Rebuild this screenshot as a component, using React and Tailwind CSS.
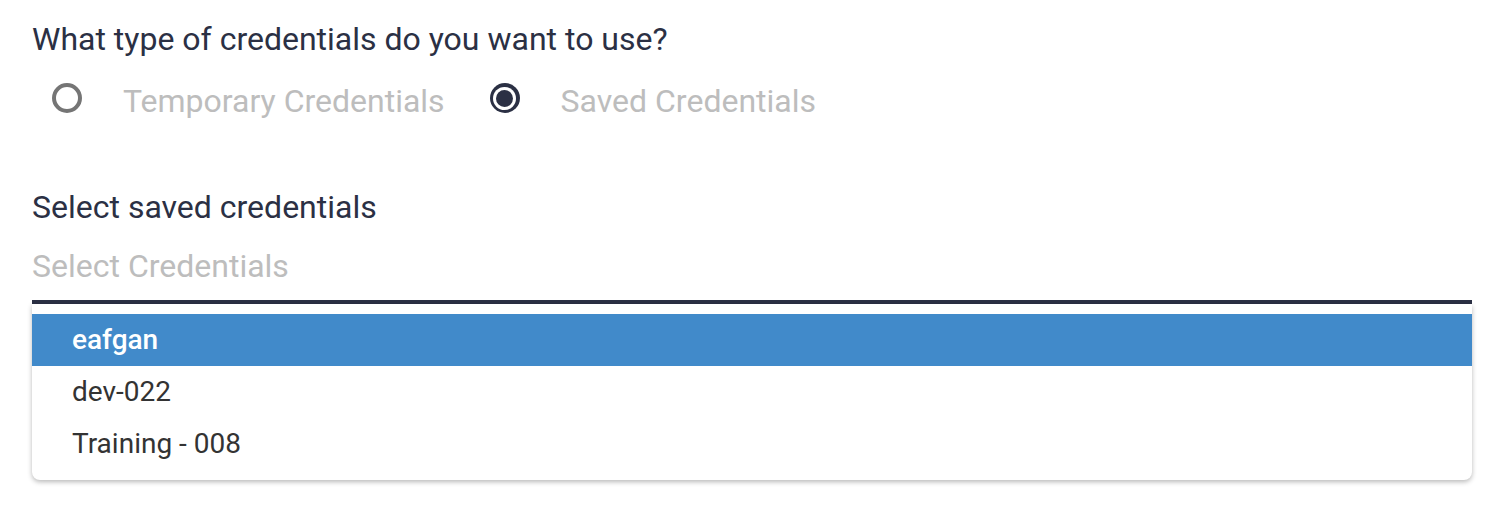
import React from "react";

export default function App() {
  const rows = ["eafgan", "dev-022", "Training - 008"];
  return (
    <div className="w-[1498px] h-[512px] bg-white pl-[32px] pr-[26px] pt-[19px]" style={{ fontFamily: "Roboto, 'Liberation Sans', sans-serif" }}>
      <div className="text-[32px] leading-[40px] text-[#2b3044]">What type of credentials do you want to use?</div>
      <div className="flex items-center h-[48px] mt-[15px] text-[32px] leading-[40px] text-[#bdbdbd]">
        <div className="ml-[20px] w-[30px] h-[30px] rounded-full border-[4px] border-[#757575]" />
        <span className="ml-[41px] mt-[5px]">Temporary Credentials</span>
        <div className="ml-[45px] w-[30px] h-[30px] rounded-full bg-[#2b3044] flex items-center justify-center">
          <div className="w-[23px] h-[23px] rounded-full bg-white flex items-center justify-center">
            <div className="w-[17px] h-[17px] rounded-full bg-[#2b3044]" />
          </div>
        </div>
        <span className="ml-[41px] mt-[5px]">Saved Credentials</span>
      </div>
      <div className="mt-[65px] text-[32px] leading-[40px] text-[#2b3044]">Select saved credentials</div>
      <div className="mt-[19px] text-[32px] leading-[40px] text-[#bdbdbd]">Select Credentials</div>
      <div className="mt-[14px] h-[4px] bg-[#2b3044]" />
      <div className="bg-white rounded-b-[8px] shadow-[0_2px_5px_rgba(0,0,0,0.28)] py-[10px]">
        {rows.map((r, i) => (
          <div
            key={r}
            className={
              i === 0
                ? "h-[52px] flex items-center pl-[40px] text-[28px] bg-[#418aca] text-white font-medium"
                : "h-[52px] flex items-center pl-[40px] text-[28px] text-[#333333]"
            }
          >
            {r}
          </div>
        ))}
      </div>
    </div>
  );
}
